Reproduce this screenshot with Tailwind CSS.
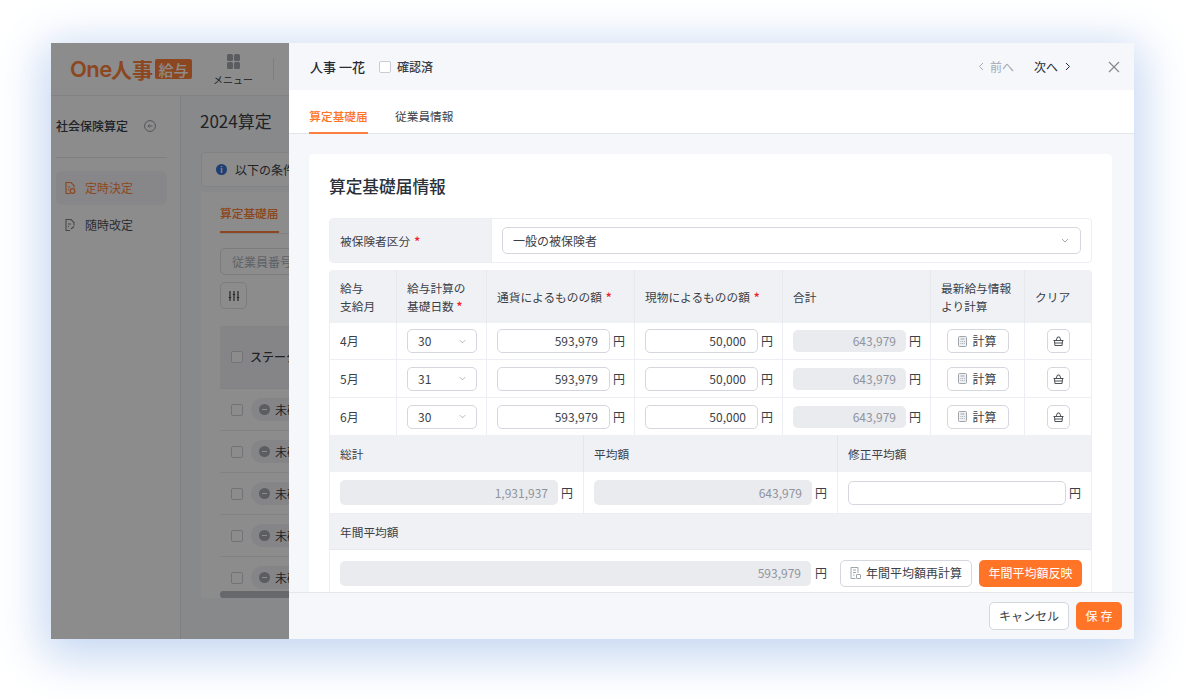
<!DOCTYPE html>
<html lang="ja"><head><meta charset="utf-8"><script src="https://cdn.jsdelivr.net/npm/@tailwindcss/browser@4"></script></head>
<body class="bg-white w-[1186px] h-[698px] overflow-hidden font-['Inter','Noto_Sans_CJK_JP',sans-serif] text-[12px] text-[#272b33]">
<div class="relative ml-[51px] mt-[43px] w-[1083px] h-[596px] shadow-[0_10px_44px_8px_#c4d6f2] overflow-hidden bg-white font-['Noto_Sans_CJK_JP',sans-serif]" style="position:absolute;left:0;top:0">
  <!-- underlying page -->
  <div class="absolute inset-0 flex flex-col bg-white">
    <div class="h-[53px] flex items-center border-b border-[#e8eaef] shrink-0">
      <div class="ml-[19px] w-[122px] shrink-0 flex items-center text-[#ff7426] font-bold leading-none whitespace-nowrap">
        <span class="text-[22px] font-['Inter'] font-semibold tracking-[-0.6px] w-[41px] shrink-0">One</span><span class="text-[21px] w-[42px] shrink-0">人事</span>
        <span class="ml-[2px] bg-[#ff7426] text-white rounded-[2px] text-[15px] w-[37px] shrink-0 justify-center h-[20px] flex items-center font-medium">給与</span>
      </div>
      <div class="ml-[20px] flex flex-col items-center w-[42px]">
        <div class="grid grid-cols-2 gap-[1px] mt-[1px]"><i class="w-[6px] h-[7px] bg-[#9a9ea6] rounded-[1.5px]"></i><i class="w-[6px] h-[7px] bg-[#9a9ea6] rounded-[1.5px]"></i><i class="w-[6px] h-[7px] bg-[#9a9ea6] rounded-[1.5px]"></i><i class="w-[6px] h-[7px] bg-[#9a9ea6] rounded-[1.5px]"></i></div>
        <span class="text-[10px] leading-[12px] mt-[5px]">メニュー</span>
      </div>
      <div class="ml-[19px] w-px h-[22px] bg-[#dfe1e6]"></div>
    </div>
    <div class="flex flex-1 min-h-0">
      <div class="w-[130px] border-r border-[#e2e4ea] pl-[5px] pr-[13px] shrink-0">
        <div class="flex items-center h-[60px] font-medium text-[12px] pb-[1px] whitespace-nowrap"><span>社会保険算定</span>
          <svg class="ml-[16px] shrink-0" width="12" height="12" viewBox="0 0 12 12" fill="none" stroke="#8a8f99"><circle cx="6" cy="6" r="5.4"/><path d="M8.5 6H4M5.5 4.5 4 6l1.500 1.500"/></svg></div>
        <div class="h-px bg-[#e2e4ea] mt-[1px]"></div>
        <div class="mt-[13px] h-[34px] rounded-[6px] bg-[#f4f5f8] flex items-center pl-[8px] text-[#ff7426]">
          <svg width="12" height="14" viewBox="0 0 12 14" fill="none" stroke="#ff7426" stroke-width="1.2"><path d="M6 12.5H2V1.500h5l3 3v2"/><path d="M4 6h2M4 8.500h1"/><circle cx="8.500" cy="10" r="2.400"/></svg>
          <span class="ml-[9px] whitespace-nowrap">定時決定</span></div>
        <div class="mt-[3px] h-[34px] flex items-center pl-[8px] text-[#3b3f47]">
          <svg width="12" height="14" viewBox="0 0 12 14" fill="none" stroke="#777" stroke-width="1.1"><path d="M6 12.500H2V1.500h5l3 3v3"/><path d="M4 6h3M4 8.500h1M7 11l3-2.500"/></svg>
          <span class="ml-[9px] whitespace-nowrap">随時改定</span></div>
      </div>
      <div class="flex-1 bg-[#f6f8fb] pl-[20px] min-w-0 overflow-hidden relative">
        <div class="text-[17px] leading-[24px] mt-[13px] -ml-[1px] text-[#272b33] whitespace-nowrap">2024算定</div>
        <div class="mt-[19px] h-[35px] w-[200px] bg-white rounded-[4px] border border-[#e8eaef] flex items-center pl-[14px]">
          <span class="w-[11px] h-[11px] rounded-full bg-[#2563c9] text-white text-[8px] font-bold flex items-center justify-center">i</span>
          <span class="ml-[8px] whitespace-nowrap">以下の条件</span></div>
        <div class="mt-[5px] w-[200px] h-[406px] bg-white pl-[19px] overflow-hidden relative">
          <div class="h-[42px] flex items-center border-b border-[#e8eaef] relative"><span class="text-[#ff7426] font-medium text-[11.7px] whitespace-nowrap">算定基礎届</span><i class="absolute left-0 bottom-0 w-[59px] h-[2px] bg-[#ff7426]"></i></div>
          <div class="mt-[14px] h-[27px] w-[120px] border border-[#dcdee4] rounded-[5px] pl-[11px] flex items-center text-[#a5a9b1] whitespace-nowrap">従業員番号</div>
          <div class="mt-[7px] w-[27px] h-[27px] border border-[#dcdee4] rounded-[5px] flex items-center justify-center"><svg width="12" height="12" viewBox="0 0 12 12" fill="none" stroke="#333" stroke-width="1.2"><path d="M2 1v10M6 1v10M10 1v10"/><path d="M.8 7.500h2.400M4.800 4.500h2.400M8.800 7.500h2.400"/></svg></div>
          <div class="mt-[17px] h-[63px] bg-[#f0f1f5] flex items-center pl-[11px] border-b border-[#e8eaef]"><i class="w-[12px] h-[12px] border border-[#c9ccd3] rounded-[2px] bg-white"></i><span class="ml-[7px] font-medium whitespace-nowrap">ステータス</span></div>
          <div class="h-[42px] flex items-center pl-[11px] border-b border-[#e8eaef]"><i class="w-[12px] h-[12px] border border-[#c9ccd3] rounded-[2px] bg-white shrink-0"></i><span class="ml-[8px] h-[23px] rounded-full bg-[#f0f1f5] pl-[8px] flex items-center whitespace-nowrap"><i class="w-[11px] h-[11px] rounded-full bg-[#9ca0a8] mr-[5px] flex items-center justify-center"><i class="w-[5px] h-[1.5px] bg-white"></i></i>未確認</span></div>
          <div class="h-[42px] flex items-center pl-[11px] border-b border-[#e8eaef]"><i class="w-[12px] h-[12px] border border-[#c9ccd3] rounded-[2px] bg-white shrink-0"></i><span class="ml-[8px] h-[23px] rounded-full bg-[#f0f1f5] pl-[8px] flex items-center whitespace-nowrap"><i class="w-[11px] h-[11px] rounded-full bg-[#9ca0a8] mr-[5px] flex items-center justify-center"><i class="w-[5px] h-[1.5px] bg-white"></i></i>未確認</span></div>
          <div class="h-[42px] flex items-center pl-[11px] border-b border-[#e8eaef]"><i class="w-[12px] h-[12px] border border-[#c9ccd3] rounded-[2px] bg-white shrink-0"></i><span class="ml-[8px] h-[23px] rounded-full bg-[#f0f1f5] pl-[8px] flex items-center whitespace-nowrap"><i class="w-[11px] h-[11px] rounded-full bg-[#9ca0a8] mr-[5px] flex items-center justify-center"><i class="w-[5px] h-[1.5px] bg-white"></i></i>未確認</span></div>
          <div class="h-[42px] flex items-center pl-[11px] border-b border-[#e8eaef]"><i class="w-[12px] h-[12px] border border-[#c9ccd3] rounded-[2px] bg-white shrink-0"></i><span class="ml-[8px] h-[23px] rounded-full bg-[#f0f1f5] pl-[8px] flex items-center whitespace-nowrap"><i class="w-[11px] h-[11px] rounded-full bg-[#9ca0a8] mr-[5px] flex items-center justify-center"><i class="w-[5px] h-[1.5px] bg-white"></i></i>未確認</span></div>
          <div class="h-[41px] flex items-center pl-[11px]"><i class="w-[12px] h-[12px] border border-[#c9ccd3] rounded-[2px] bg-white shrink-0"></i><span class="ml-[8px] h-[23px] rounded-full bg-[#f0f1f5] pl-[8px] flex items-center whitespace-nowrap"><i class="w-[11px] h-[11px] rounded-full bg-[#9ca0a8] mr-[5px] flex items-center justify-center"><i class="w-[5px] h-[1.5px] bg-white"></i></i>未確認</span></div>
          <i class="absolute left-[19px] bottom-0 w-[200px] h-[7px] rounded-[3px] bg-[#b4b7bc]"></i>
        </div>
      </div>
    </div>
  </div>
  <div class="absolute inset-0 bg-[#1a1a1a]/50"></div>

  <!-- drawer -->
  <div class="absolute right-0 top-0 bottom-0 w-[845px] bg-[#f5f7fb] flex flex-col">
    <div class="h-[47px] shrink-0 flex items-center pl-[21px] pr-[14px]">
      <span class="text-[13px] font-medium">人事 一花</span>
      <i class="ml-[14px] w-[12px] h-[12px] border border-[#c9ccd3] rounded-[2px] bg-white"></i>
      <span class="ml-[6px] text-[12px] text-[#3b3f47] font-medium">確認済</span>
      <div class="ml-auto flex items-center text-[#a5a9b1]">
        <svg width="7" height="9" viewBox="0 0 7 9" fill="none" stroke="#a5a9b1"><path d="M5 1 1.500 4.500 5 8"/></svg>
        <span class="ml-[5px]">前へ</span>
      </div>
      <div class="ml-[20px] flex items-center">
        <span>次へ</span>
        <svg class="ml-[6px]" width="7" height="9" viewBox="0 0 7 9" fill="none" stroke="#272b33"><path d="M2 1l3.500 3.500L2 8"/></svg>
      </div>
      <svg class="ml-[37px]" width="12" height="12" viewBox="0 0 12 12" fill="none" stroke="#84888f" stroke-width="1.2"><path d="M1 1l10 10M11 1 1 11"/></svg>
    </div>
    <div class="h-[44px] shrink-0 bg-white border-b border-[#e4e6ec] flex items-end pl-[20px] gap-[27px]">
      <div class="h-[44px] flex items-center justify-center border-b-2 border-[#ff7f3f] -mb-px text-[#ff7426] font-medium w-[59px] text-[11.7px] pt-[9px]">算定基礎届</div>
      <div class="h-[44px] flex items-center text-[11.7px] text-[#3b3f47] pt-[9px]">従業員情報</div>
    </div>
    <div class="flex-1 min-h-0 overflow-hidden relative px-[20px] pt-[20px]">
      <div class="w-[803px] bg-white rounded-t-[4px] px-[20px]">
        <div class="h-[64px] pt-[19px] text-[16.7px] leading-[26px] font-medium text-[#2c3039]">算定基礎届情報</div>
        <div class="flex h-[45px] border border-[#eceef3] rounded-[4px] overflow-hidden w-[763px]">
          <div class="w-[162px] bg-[#f0f1f5] flex items-center pl-[10px] text-[#3b3f47] text-[11.7px] border-r border-[#eceef3]">被保険者区分<b class="text-[#f5222d] ml-[4px]">*</b></div>
          <div class="flex-1 flex items-center pl-[10px] pr-[10px]">
            <div class="w-full h-[27px] border border-[#d5d7de] rounded-[5px] flex items-center pl-[10px] pr-[11px] justify-between text-[#3b3f47]">一般の被保険者<svg width="8" height="5" viewBox="0 0 8 5" fill="none" stroke="#a5a9b1"><path d="M1 1l3 3 3-3"/></svg></div>
          </div>
        </div>
        <div class="mt-[7px] w-[763px] border-x border-[#eceef3] rounded-t-[4px] overflow-hidden">
          <div class="grid grid-cols-[67px_90px_148px_148px_148px_94px_1fr] h-[53px] bg-[#f0f1f5] text-[11.7px] leading-[18px] text-[#3b3f47]">
            <div class="flex items-center pl-[10px] border-r border-[#e7e9ef]">給与<br>支給月</div>
            <div class="flex items-center pl-[10px] border-r border-[#e7e9ef]"><span>給与計算の<br>基礎日数 <b class="text-[#f5222d]">*</b></span></div>
            <div class="flex items-center pl-[10px] border-r border-[#e7e9ef]">通貨によるものの額<b class="text-[#f5222d] ml-[4px]">*</b></div>
            <div class="flex items-center pl-[10px] border-r border-[#e7e9ef]">現物によるものの額<b class="text-[#f5222d] ml-[4px]">*</b></div>
            <div class="flex items-center pl-[10px] border-r border-[#e7e9ef]">合計</div>
            <div class="flex items-center pl-[10px] border-r border-[#e7e9ef]">最新給与情報<br>より計算</div>
            <div class="flex items-center pl-[10px]">クリア</div>
          </div>

          <div class="grid grid-cols-[67px_90px_148px_148px_148px_94px_1fr] h-[37px] border-b border-[#eceef3] text-[#3b3f47]">
            <div class="flex items-center pl-[10px] border-r border-[#eceef3]">4月</div>
            <div class="flex items-center pl-[10px] border-r border-[#eceef3]"><div class="w-[70px] h-[24px] border border-[#d5d7de] rounded-[5px] flex items-center justify-between pl-[10px] pr-[10px]">30<svg width="7" height="5" viewBox="0 0 8 5" fill="none" stroke="#a5a9b1"><path d="M1 1l3 3 3-3"/></svg></div></div>
            <div class="flex items-center pl-[10px] border-r border-[#eceef3]"><div class="w-[113px] h-[24px] border border-[#d5d7de] rounded-[5px] flex items-center justify-end pr-[11px]">593,979</div><span class="ml-[3px]">円</span></div>
            <div class="flex items-center pl-[10px] border-r border-[#eceef3]"><div class="w-[113px] h-[24px] border border-[#d5d7de] rounded-[5px] flex items-center justify-end pr-[11px]">50,000</div><span class="ml-[3px]">円</span></div>
            <div class="flex items-center pl-[10px] border-r border-[#eceef3]"><div class="w-[113px] h-[22px] bg-[#eaebef] rounded-[5px] flex items-center justify-end pr-[10px] text-[#8f939b]">643,979</div><span class="ml-[3px]">円</span></div>
            <div class="flex items-center justify-center border-r border-[#eceef3]"><div class="w-[62px] h-[24px] border border-[#d5d7de] rounded-[5px] flex items-center justify-center gap-[5px]"><svg width="9" height="11" viewBox="0 0 9 11" fill="#eef0f3" stroke="#a0a4ab"><rect x=".5" y=".5" width="8" height="10" rx="1"/><path d="M2.500 3h4M2.500 5.500h.8M4.200 5.500h.8M5.900 5.500h.8M2.500 7.500h.8M4.200 7.500h.8M5.900 7.500h.8"/></svg>計算</div></div>
            <div class="flex items-center pl-[22px]"><div class="w-[23px] h-[24px] border border-[#d5d7de] rounded-[5px] flex items-center justify-center"><svg width="11" height="10" viewBox="0 0 11 10" fill="none" stroke="#3b3f47" stroke-width=".9"><path d="M3 4.500 4.500 1h2L8 4.500M.5 4.500h10M1.500 4.500l.4 5h7.200l.4-5M1.700 7h7.600"/></svg></div></div>
          </div>
          <div class="grid grid-cols-[67px_90px_148px_148px_148px_94px_1fr] h-[38px] border-b border-[#eceef3] text-[#3b3f47]">
            <div class="flex items-center pl-[10px] border-r border-[#eceef3]">5月</div>
            <div class="flex items-center pl-[10px] border-r border-[#eceef3]"><div class="w-[70px] h-[24px] border border-[#d5d7de] rounded-[5px] flex items-center justify-between pl-[10px] pr-[10px]">31<svg width="7" height="5" viewBox="0 0 8 5" fill="none" stroke="#a5a9b1"><path d="M1 1l3 3 3-3"/></svg></div></div>
            <div class="flex items-center pl-[10px] border-r border-[#eceef3]"><div class="w-[113px] h-[24px] border border-[#d5d7de] rounded-[5px] flex items-center justify-end pr-[11px]">593,979</div><span class="ml-[3px]">円</span></div>
            <div class="flex items-center pl-[10px] border-r border-[#eceef3]"><div class="w-[113px] h-[24px] border border-[#d5d7de] rounded-[5px] flex items-center justify-end pr-[11px]">50,000</div><span class="ml-[3px]">円</span></div>
            <div class="flex items-center pl-[10px] border-r border-[#eceef3]"><div class="w-[113px] h-[22px] bg-[#eaebef] rounded-[5px] flex items-center justify-end pr-[10px] text-[#8f939b]">643,979</div><span class="ml-[3px]">円</span></div>
            <div class="flex items-center justify-center border-r border-[#eceef3]"><div class="w-[62px] h-[24px] border border-[#d5d7de] rounded-[5px] flex items-center justify-center gap-[5px]"><svg width="9" height="11" viewBox="0 0 9 11" fill="#eef0f3" stroke="#a0a4ab"><rect x=".5" y=".5" width="8" height="10" rx="1"/><path d="M2.500 3h4M2.500 5.500h.8M4.200 5.500h.8M5.900 5.500h.8M2.500 7.500h.8M4.200 7.500h.8M5.900 7.500h.8"/></svg>計算</div></div>
            <div class="flex items-center pl-[22px]"><div class="w-[23px] h-[24px] border border-[#d5d7de] rounded-[5px] flex items-center justify-center"><svg width="11" height="10" viewBox="0 0 11 10" fill="none" stroke="#3b3f47" stroke-width=".9"><path d="M3 4.500 4.500 1h2L8 4.500M.5 4.500h10M1.500 4.500l.4 5h7.200l.4-5M1.700 7h7.600"/></svg></div></div>
          </div>
          <div class="grid grid-cols-[67px_90px_148px_148px_148px_94px_1fr] h-[37px] text-[#3b3f47]">
            <div class="flex items-center pl-[10px] border-r border-[#eceef3]">6月</div>
            <div class="flex items-center pl-[10px] border-r border-[#eceef3]"><div class="w-[70px] h-[24px] border border-[#d5d7de] rounded-[5px] flex items-center justify-between pl-[10px] pr-[10px]">30<svg width="7" height="5" viewBox="0 0 8 5" fill="none" stroke="#a5a9b1"><path d="M1 1l3 3 3-3"/></svg></div></div>
            <div class="flex items-center pl-[10px] border-r border-[#eceef3]"><div class="w-[113px] h-[24px] border border-[#d5d7de] rounded-[5px] flex items-center justify-end pr-[11px]">593,979</div><span class="ml-[3px]">円</span></div>
            <div class="flex items-center pl-[10px] border-r border-[#eceef3]"><div class="w-[113px] h-[24px] border border-[#d5d7de] rounded-[5px] flex items-center justify-end pr-[11px]">50,000</div><span class="ml-[3px]">円</span></div>
            <div class="flex items-center pl-[10px] border-r border-[#eceef3]"><div class="w-[113px] h-[22px] bg-[#eaebef] rounded-[5px] flex items-center justify-end pr-[10px] text-[#8f939b]">643,979</div><span class="ml-[3px]">円</span></div>
            <div class="flex items-center justify-center border-r border-[#eceef3]"><div class="w-[62px] h-[24px] border border-[#d5d7de] rounded-[5px] flex items-center justify-center gap-[5px]"><svg width="9" height="11" viewBox="0 0 9 11" fill="#eef0f3" stroke="#a0a4ab"><rect x=".5" y=".5" width="8" height="10" rx="1"/><path d="M2.500 3h4M2.500 5.500h.8M4.200 5.500h.8M5.900 5.500h.8M2.500 7.500h.8M4.200 7.500h.8M5.900 7.500h.8"/></svg>計算</div></div>
            <div class="flex items-center pl-[22px]"><div class="w-[23px] h-[24px] border border-[#d5d7de] rounded-[5px] flex items-center justify-center"><svg width="11" height="10" viewBox="0 0 11 10" fill="none" stroke="#3b3f47" stroke-width=".9"><path d="M3 4.500 4.500 1h2L8 4.500M.5 4.500h10M1.500 4.500l.4 5h7.200l.4-5M1.700 7h7.600"/></svg></div></div>
          </div>

          <div class="grid grid-cols-[254px_254px_1fr] h-[37px] bg-[#f0f1f5] text-[11.7px] text-[#3b3f47]">
            <div class="flex items-center pl-[10px] border-r border-[#e4e6ec]">総計</div>
            <div class="flex items-center pl-[10px] border-r border-[#e4e6ec]">平均額</div>
            <div class="flex items-center pl-[10px]">修正平均額</div>
          </div>
          <div class="grid grid-cols-[254px_254px_1fr] h-[42px] border-b border-[#eceef3] text-[#3b3f47]">
            <div class="flex items-center pl-[10px] border-r border-[#eceef3]"><div class="w-[218px] h-[25px] bg-[#eaebef] rounded-[5px] flex items-center justify-end pr-[10px] text-[#8f939b]">1,931,937</div><span class="ml-[3px]">円</span></div>
            <div class="flex items-center pl-[10px] border-r border-[#eceef3]"><div class="w-[218px] h-[25px] bg-[#eaebef] rounded-[5px] flex items-center justify-end pr-[10px] text-[#8f939b]">643,979</div><span class="ml-[3px]">円</span></div>
            <div class="flex items-center pl-[10px]"><div class="w-[218px] h-[24px] border border-[#d5d7de] rounded-[5px]"></div><span class="ml-[3px]">円</span></div>
          </div>
          <div class="h-[36px] bg-[#f0f1f5] border-b border-[#e7e9ef] flex items-center pl-[10px] text-[11.7px] text-[#3b3f47]">年間平均額</div>
          <div class="h-[46px] flex items-center pl-[10px] text-[#3b3f47]">
            <div class="w-[471px] h-[25px] bg-[#eaebef] rounded-[5px] flex items-center justify-end pr-[10px] text-[#8f939b] shrink-0">593,979</div><span class="ml-[4px]">円</span>
            <div class="ml-[13px] w-[132px] h-[27px] border border-[#d5d7de] bg-white rounded-[5px] flex items-center justify-center gap-[5px] shrink-0"><svg width="11" height="12" viewBox="0 0 11 12" fill="none" stroke="#a0a4ab"><path d="M8 6V.5H1v11h4.500"/><path d="M3 3h3M3 5.500h3M3 8h1.500"/><rect x="6.500" y="7.500" width="4" height="4" rx=".5"/></svg>年間平均額再計算</div>
            <div class="ml-[7px] w-[103px] h-[27px] bg-[#ff7426] text-white rounded-[5px] flex items-center justify-center shrink-0">年間平均額反映</div>
          </div>
        </div>
      </div>
    </div>
    <div class="h-[47px] shrink-0 border-t border-[#e4e6ec] bg-[#f5f7fb] flex items-center justify-end pr-[12px] gap-[7px] relative">
      <div class="w-[80px] h-[28px] bg-white border border-[#d5d7de] rounded-[5px] flex items-center justify-center text-[#3b3f47]">キャンセル</div>
      <div class="w-[46px] h-[28px] bg-[#ff7426] text-white rounded-[5px] flex items-center justify-center tracking-[3px] pl-[3px]">保存</div>
    </div>
  </div>
</div>
</body></html>
